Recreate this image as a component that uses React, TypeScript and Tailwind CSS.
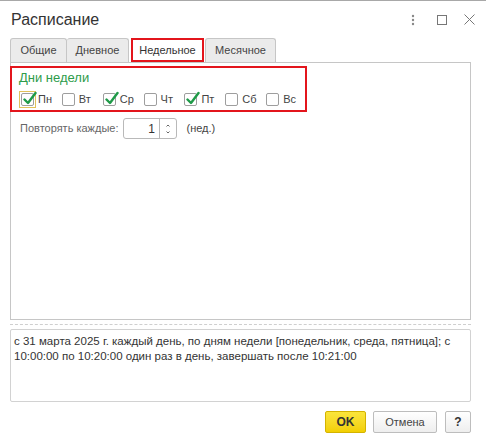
import React from "react";

const days = [
  { label: "Пн", checked: true, focused: true },
  { label: "Вт", checked: false },
  { label: "Ср", checked: true },
  { label: "Чт", checked: false },
  { label: "Пт", checked: true },
  { label: "Сб", checked: false },
  { label: "Вс", checked: false },
];

function Check({ checked, focused }: { checked: boolean; focused?: boolean }) {
  const box = (
    <span className="relative block h-[13px] w-[13px] rounded-[2px] border border-[#9e9e9e] bg-white">
      {checked && (
        <svg
          className="absolute left-[0px] top-[-3px]"
          width="15"
          height="15"
          viewBox="0 0 15 15"
        >
          <path
            d="M2.5 8.5 L6 12 L13.5 2"
            fill="none"
            stroke="#1f9a48"
            strokeWidth="2.4"
            strokeLinecap="round"
            strokeLinejoin="round"
          />
        </svg>
      )}
    </span>
  );
  if (focused) {
    return (
      <span className="flex h-[17px] w-[17px] items-center justify-center border border-[#e2c25a]">
        {box}
      </span>
    );
  }
  return <span className="flex h-[17px] w-[17px] items-center justify-center">{box}</span>;
}

export default function App() {
  return (
    <div className="flex h-[442px] w-[486px] flex-col overflow-hidden border-t border-[#a8a8a8] bg-white font-['Liberation_Sans',Arial,sans-serif] text-[11px] text-[#444]">
      {/* Header */}
      <div className="flex h-[37px] items-center pl-[11px] pr-[11px]">
        <span className="text-[16px] text-[#333]">Расписание</span>
        <div className="ml-auto flex items-center">
          <svg width="4" height="12" viewBox="0 0 4 12" className="mr-[22px]">
            <circle cx="2" cy="2" r="1.2" fill="#888" />
            <circle cx="2" cy="6" r="1.2" fill="#888" />
            <circle cx="2" cy="10" r="1.2" fill="#888" />
          </svg>
          <svg width="10" height="10" viewBox="0 0 10 10" className="mr-[17px]">
            <rect x="0.5" y="0.5" width="9" height="9" fill="none" stroke="#777" strokeWidth="1" />
          </svg>
          <svg width="11" height="11" viewBox="0 0 11 11">
            <path d="M0.5 0.5 L10.5 10.5 M10.5 0.5 L0.5 10.5" stroke="#777" strokeWidth="1" />
          </svg>
        </div>
      </div>

      {/* Tabs */}
      <div className="flex h-[24px] items-end pl-[10px]">
        <div className="flex h-[24px] w-[57px] items-center justify-center rounded-t-[3px] border border-b-0 border-[#c6c6c6] bg-[#ebebeb]">
          Общие
        </div>
        <div className="flex h-[24px] w-[62px] items-center justify-center rounded-t-[3px] border border-b-0 border-l-0 border-[#c6c6c6] bg-[#ebebeb]">
          Дневное
        </div>
        <div className="ml-[2px] mr-[1px] flex h-[24px] w-[73px] items-center justify-center border-2 border-[#e3151c] bg-white text-[#333]">
          Недельное
        </div>
        <div className="flex h-[24px] w-[71px] items-center justify-center rounded-t-[3px] border border-b-0 border-[#c6c6c6] bg-[#ebebeb]">
          Месячное
        </div>
      </div>

      {/* Panel */}
      <div className="mx-[10px] flex h-[258px] w-[461px] flex-col border border-[#c6c6c6]">
        <div className="-ml-px mt-[3px] flex h-[46px] w-[297px] flex-col border-2 border-[#e3151c] pl-[7px] pt-[2px]">
          <span className="text-[13px] leading-[16px] text-[#2d9c4a]">Дни недели</span>
          <div className="mt-[5px] flex items-center">
            {days.map((d) => (
              <div key={d.label} className="flex w-[41px] items-center">
                <Check checked={d.checked} focused={d.focused} />
                <span className="ml-[2px] text-[#444]">{d.label}</span>
              </div>
            ))}
          </div>
        </div>

        <div className="mt-[6px] flex items-center pl-[9px]">
          <span className="text-[#666]">Повторять каждые:</span>
          <div className="ml-[5px] flex h-[21px] w-[54px] rounded-[3px] border border-[#b9b9b9] bg-white">
            <span className="flex w-[35px] items-center justify-end pr-[4px] text-[12px] text-[#333]">1</span>
            <div className="flex w-[18px] flex-col items-center justify-center border-l border-[#b9b9b9]">
              <svg width="6" height="14" viewBox="0 0 6 14">
                <path d="M1.5 4.5 L3 3 L4.5 4.5" fill="none" stroke="#666" strokeWidth="1" />
                <path d="M1.5 9.5 L3 11 L4.5 9.5" fill="none" stroke="#666" strokeWidth="1" />
              </svg>
            </div>
          </div>
          <span className="ml-[9px] text-[#444]">(нед.)</span>
        </div>
      </div>

      {/* Dashed separator */}
      <div className="mx-[10px] mt-[4px] w-[461px] border-t border-dashed border-[#cfcfcf]" />

      {/* Summary */}
      <div className="mx-[10px] mt-[4px] h-[73px] w-[461px] rounded-[2px] border border-[#d2d2d2] px-[3px] pt-[4px] text-[11.5px] leading-[15px] text-[#333]">
        с 31 марта 2025 г. каждый день, по дням недели [понедельник, среда, пятница]; с
        10:00:00 по 10:20:00 один раз в день, завершать после 10:21:00
      </div>

      {/* Buttons */}
      <div className="mt-[9px] flex justify-end pr-[15px]">
        <button className="flex h-[22px] w-[41px] items-center justify-center rounded-[2px] border border-[#d4b300] bg-gradient-to-b from-[#fbe53a] to-[#f2cf00] text-[12px] font-bold text-[#333]">
          OK
        </button>
        <button className="ml-[7px] flex h-[22px] w-[64px] items-center justify-center rounded-[2px] border border-[#bdbdbd] bg-gradient-to-b from-white to-[#eeeeee] text-[#444]">
          Отмена
        </button>
        <button className="ml-[8px] flex h-[22px] w-[26px] items-center justify-center rounded-[2px] border border-[#bdbdbd] bg-gradient-to-b from-white to-[#eeeeee] text-[12px] font-bold text-[#333]">
          ?
        </button>
      </div>
    </div>
  );
}
